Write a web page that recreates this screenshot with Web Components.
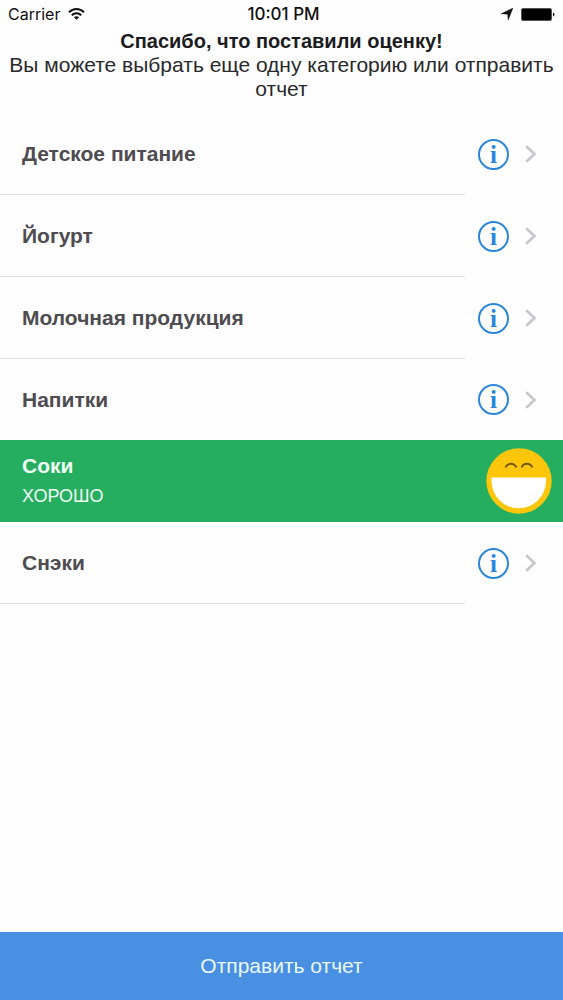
<!DOCTYPE html>
<html lang="ru">
<head>
<meta charset="utf-8">
<meta name="viewport" content="width=device-width, initial-scale=1">
<title>Оценка категорий</title>
<style>
body { margin: 0; background: #fefefe; font-family: "Liberation Sans", Arial, sans-serif; }
</style>
</head>
<body>
<rating-screen>
  <status-bar slot="status" carrier="Carrier" time="10:01 PM"></status-bar>
  <thanks-header slot="header">
    <span slot="title">Спасибо, что поставили оценку!</span>
    Вы можете выбрать еще одну категорию или отправить отчет
  </thanks-header>
  <category-row>Детское питание</category-row>
  <category-row>Йогурт</category-row>
  <category-row>Молочная продукция</category-row>
  <category-row plain>Напитки</category-row>
  <rated-row>Соки<span slot="rating">ХОРОШО</span></rated-row>
  <category-row>Снэки</category-row>
  <submit-button slot="footer">Отправить отчет</submit-button>
</rating-screen>
<script>
function define(name, html) {
  const template = document.createElement('template');
  template.innerHTML = html;
  customElements.define(name, class extends HTMLElement {
    constructor() {
      super();
      this.attachShadow({ mode: 'open' }).append(template.content.cloneNode(true));
    }
    connectedCallback() {
      this.shadowRoot.querySelectorAll('[data-attr]').forEach(el => {
        el.textContent = this.getAttribute(el.dataset.attr);
      });
    }
  });
}

define('rating-screen', `
  <style>
    :host { display: flex; flex-direction: column; min-height: 100vh; }
    main { flex: 1; }
  </style>
  <slot name="status"></slot>
  <slot name="header"></slot>
  <main><slot></slot></main>
  <slot name="footer"></slot>`);

define('status-bar', `
  <style>
    :host { display: grid; grid-template-columns: 1fr auto 1fr; align-items: center; height: 28px;
      padding: 0 8px 0 12px; font: 17px/28px Inter, sans-serif; color: #111; }
    .left, .right { display: flex; align-items: center; gap: 8px; }
    .left { margin-left: -4px; font-size: 16px; }
    .right { justify-content: flex-end; }
    .time { font-weight: 500; }
    svg { display: block; }
  </style>
  <div class="left">
    <span data-attr="carrier"></span>
    <svg width="17" height="12" viewBox="0 0 17 12" fill="none" stroke="#111" stroke-width="2" aria-hidden="true">
      <path d="M1 4.300C5.200 0 11.800 0 16 4.300M3.800 7.200c2.700-2.700 6.700-2.700 9.400 0"/>
      <path d="M8.500 11.800 5.900 9.200c1.500-1.400 3.700-1.400 5.200 0z" fill="#111" stroke="none"/>
    </svg>
  </div>
  <span class="time" data-attr="time"></span>
  <div class="right">
    <svg width="12" height="12" viewBox="0 0 12 12" aria-hidden="true"><path d="M12 0 7.200 12 6.600 6.200 0 5.800z" fill="#111" stroke="#111" stroke-width=".4"/></svg>
    <svg width="34" height="13" viewBox="0 0 34 13" aria-hidden="true">
      <rect x=".5" y=".5" width="30" height="12" rx="1.500" fill="#000" stroke="#555"/>
      <path d="M32 4.500q1.500.3 1.500 2t-1.500 2z" fill="#111"/>
    </svg>
  </div>`);

define('thanks-header', `
  <style>
    :host { display: block; padding: 1px 8px 12px; text-align: center; font-size: 21px; line-height: 24px; color: #29292b; }
    h1 { margin: 0; font-size: 20px; line-height: inherit; color: #1c1c1e; }
    p { margin: 0; }
  </style>
  <h1><slot name="title"></slot></h1>
  <p><slot></slot></p>`);

define('info-button', `
  <style>
    :host { display: block; }
    button { box-sizing: border-box; display: flex; align-items: center; justify-content: center; width: 31px; height: 31px;
      padding: 0; border: 2px solid #2a86dc; border-radius: 50%; background: none; color: #2a86dc;
      font: bold 25px/27px "Liberation Serif", serif; }
  </style>
  <button type="button" aria-label="Информация">i</button>`);

define('category-row', `
  <style>
    :host { display: flex; color: #4e4c50; }
    .label { flex: 1; display: flex; align-items: center; min-height: 81px; padding-left: 22px;
      border-bottom: 1px solid #dfdfe1; font-size: 21px; font-weight: bold; }
    :host([plain]) .label { border-bottom: 0; }
    .tools { display: flex; align-items: center; gap: 16px; width: 85px; padding-left: 13px; }
    svg { display: block; }
  </style>
  <div class="label"><slot></slot></div>
  <div class="tools">
    <info-button></info-button>
    <svg width="12" height="18" viewBox="0 0 12 18" fill="none" stroke="#c7c7cb" stroke-width="2.600" aria-hidden="true"><path d="m1.200 1.200 8.300 7.800-8.300 7.800"/></svg>
  </div>`);

define('rated-row', `
  <style>
    :host { display: flex; align-items: center; justify-content: space-between; min-height: 82px; padding: 0 11px 0 22px;
      background: #26ae60; color: #effff4; }
    .text { display: grid; gap: 6px; }
    .name { font-size: 21px; line-height: 24px; font-weight: bold; }
    .rating { font-size: 18px; line-height: 24px; }
    svg { display: block; }
  </style>
  <div class="text">
    <div class="name"><slot></slot></div>
    <div class="rating"><slot name="rating"></slot></div>
  </div>
  <svg width="66" height="66" viewBox="0 0 66 66" role="img" aria-label="Улыбка">
    <circle cx="33" cy="33" r="32.700" fill="#fdc60a"/>
    <path d="M5.500 29.500h54.500v3.500a27.200 27.200 0 0 1-54.500 0z" fill="#fff"/>
    <path d="M19.500 19.500c2.200-5 8.500-5 11 0M35.500 19.500c2.200-5 8.500-5 11 0" fill="none" stroke="#73570c" stroke-width="1.800"/>
  </svg>`);

define('submit-button', `
  <style>
    :host { display: block; }
    button { display: block; width: 100%; height: 68px; padding: 0; border: 0; background: #4a90e2; color: #e9f8ff;
      font: 21px/24px "Liberation Sans", Arial, sans-serif; }
  </style>
  <button type="button"><slot></slot></button>`);
</script>
</body>
</html>
